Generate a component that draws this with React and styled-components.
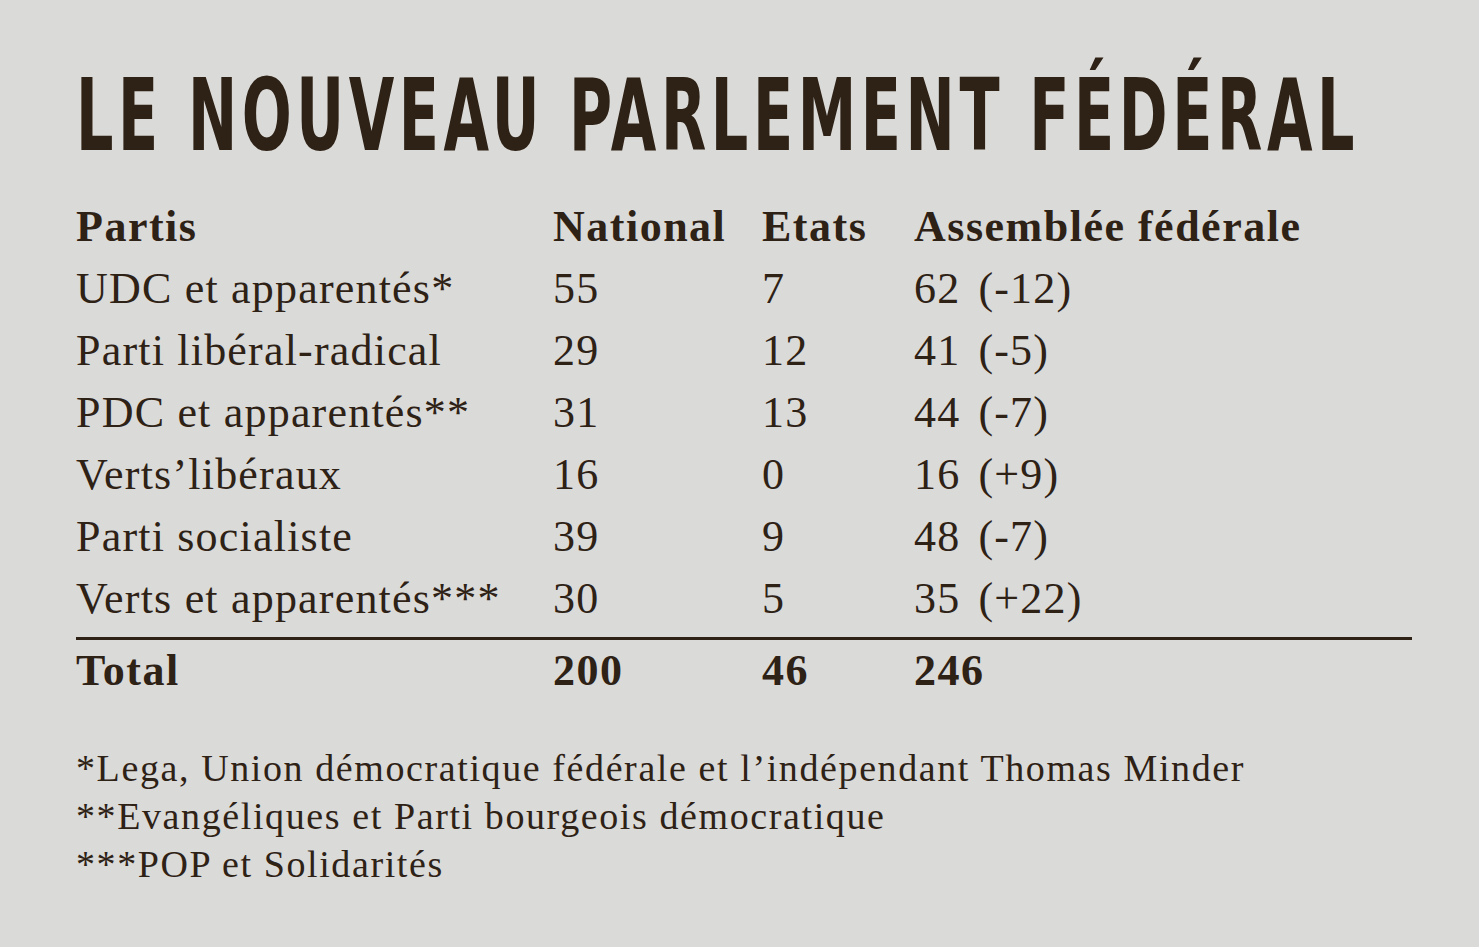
import React from "react";
import styled, { createGlobalStyle } from "styled-components";

const Global = createGlobalStyle`
  html, body { margin: 0; padding: 0; background: #dadad8; }
  body { width: 1479px; height: 947px; overflow: hidden; }
`;

const Ink = "#2e2115";

const Page = styled.div`
  width: 1479px;
  height: 947px;
  box-sizing: border-box;
  padding: 66px 67px 0 76px;
  background: #dadad8;
  color: ${Ink};
  font-family: "Liberation Serif", "Times New Roman", serif;
`;

const Title = styled.h1`
  margin: 0;
  height: 100px;
  font-family: "DejaVu Sans Condensed", "DejaVu Sans", sans-serif;
  font-weight: 700;
  font-size: 99px;
  line-height: 100px;
  letter-spacing: 7px;
  white-space: nowrap;
  transform: scaleX(0.66);
  transform-origin: left center;
`;

const Table = styled.div`
  margin-top: 30px;
  display: grid;
  grid-template-columns: 477px 209px 152px 1fr;
`;

const Cell = styled.div`
  height: 62px;
  line-height: 62px;
  font-size: 44px;
  letter-spacing: ${(p) => (p.$bold ? "1.5px" : "1.2px")};
  font-weight: ${(p) => (p.$bold ? 700 : 400)};
  white-space: nowrap;
  ${(p) => p.$total && `
    border-top: 3px solid ${Ink};
    margin-top: 7px;
  `}
`;

const Delta = styled.span`
  margin-left: 18px;
`;

const Notes = styled.div`
  margin-top: 42px;
  font-size: 38px;
  line-height: 48px;
  letter-spacing: 1.6px;
`;

const rows = [
  ["UDC et apparentés*", "55", "7", "62", "(-12)"],
  ["Parti libéral-radical", "29", "12", "41", "(-5)"],
  ["PDC et apparentés**", "31", "13", "44", "(-7)"],
  ["Verts\u2019libéraux", "16", "0", "16", "(+9)"],
  ["Parti socialiste", "39", "9", "48", "(-7)"],
  ["Verts et apparentés***", "30", "5", "35", "(+22)"],
];

export default function App() {
  return (
    <Page>
      <Global />
      <Title>LE NOUVEAU PARLEMENT FÉDÉRAL</Title>
      <Table>
        <Cell $bold>Partis</Cell>
        <Cell $bold>National</Cell>
        <Cell $bold>Etats</Cell>
        <Cell $bold>Assemblée fédérale</Cell>
        {rows.map((r) => (
          <React.Fragment key={r[0]}>
            <Cell>{r[0]}</Cell>
            <Cell>{r[1]}</Cell>
            <Cell>{r[2]}</Cell>
            <Cell>
              {r[3]}
              <Delta>{r[4]}</Delta>
            </Cell>
          </React.Fragment>
        ))}
        <Cell $bold $total>Total</Cell>
        <Cell $bold $total>200</Cell>
        <Cell $bold $total>46</Cell>
        <Cell $bold $total>246</Cell>
      </Table>
      <Notes>
        <div>*Lega, Union démocratique fédérale et l’indépendant Thomas Minder</div>
        <div>**Evangéliques et Parti bourgeois démocratique</div>
        <div>***POP et Solidarités</div>
      </Notes>
    </Page>
  );
}
